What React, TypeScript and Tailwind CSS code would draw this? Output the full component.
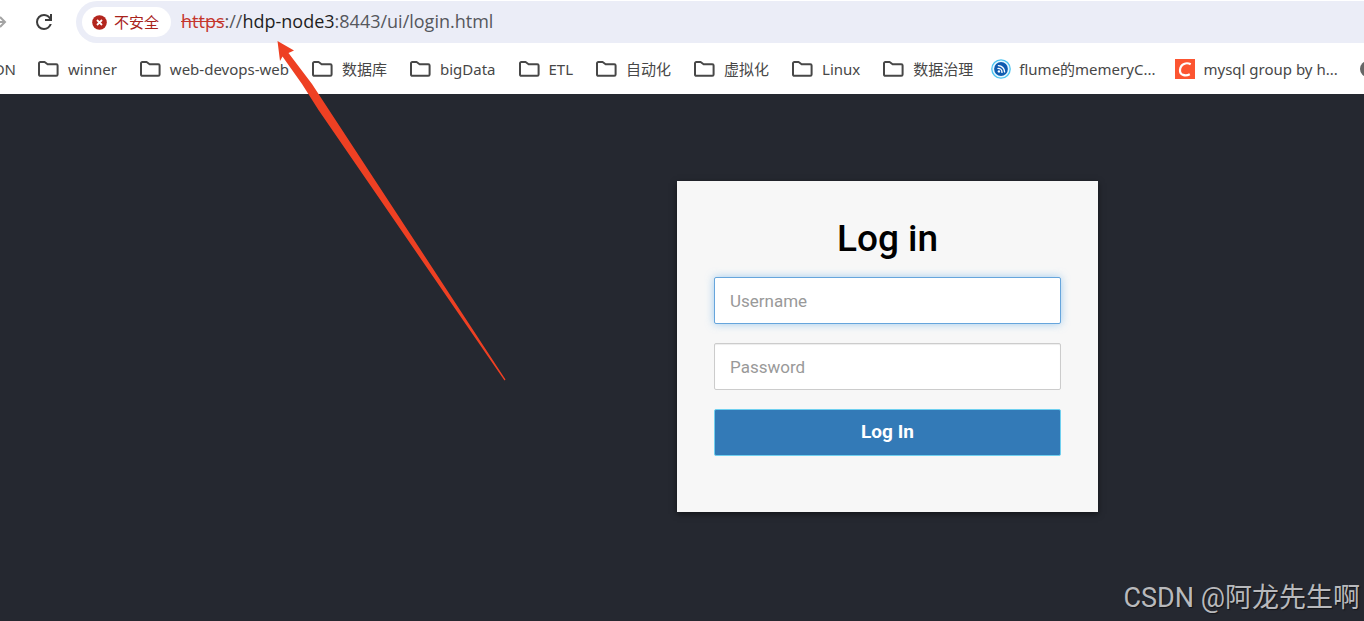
function FolderIcon() {
  return (
    <svg width="22" height="18" viewBox="0 0 22 18" fill="none" stroke="#474747" strokeWidth="2" strokeLinejoin="round" className="shrink-0" aria-hidden="true">
      <path d="M3.300 2H7.600l3 2.200H19.300A1.300 1.300 0 0 1 20.600 5.500v9A1.300 1.300 0 0 1 19.300 15.800H3.300A1.300 1.300 0 0 1 2 14.500V3.300A1.300 1.300 0 0 1 3.300 2z" />
    </svg>
  );
}

function FeedIcon() {
  return (
    <svg width="20" height="20" viewBox="0 0 20 20" className="shrink-0" aria-hidden="true">
      <circle cx="10" cy="10" r="9.200" fill="#e8f8ff" stroke="#4cc4f0" strokeWidth="1.300" />
      <circle cx="10" cy="10" r="6.900" fill="#0f5cb0" />
      <circle cx="7.900" cy="12.400" r="1.200" fill="#fff" />
      <path d="M7 9.400a4 4 0 0 1 4 4M7.400 6.600a6.400 6.400 0 0 1 6.200 6.300" fill="none" stroke="#fff" strokeWidth="1.400" strokeLinecap="round" />
    </svg>
  );
}

function CIcon() {
  return (
    <svg width="20" height="20" viewBox="0 0 20 20" className="shrink-0" aria-hidden="true">
      <rect width="20" height="20" fill="#fc5531" />
      <path d="M15.700 5.300C11.500 2.900 5.600 4.800 5 10.800c-.4 5.400 5.400 6.700 9.800 4.500" fill="none" stroke="#fff" strokeWidth="2.200" />
    </svg>
  );
}

const folders = ["winner", "web-devops-web", "数据库", "bigData", "ETL", "自动化", "虚拟化", "Linux", "数据治理"];

const sites = [
  { label: "flume的memeryC...", icon: <FeedIcon /> },
  { label: "mysql group by h...", icon: <CIcon /> },
];

function AddressBar() {
  return (
    <div className="flex h-[43px] items-center font-['Open_Sans','Noto_Sans_CJK_SC',sans-serif]">
      <button type="button" aria-label="Forward" className="w-8 shrink-0">
        <svg width="8" height="16" viewBox="0 0 8 16" fill="none" stroke="#a3a3a3" strokeWidth="2" aria-hidden="true">
          <path d="M0 8h5M0 3l5 5-5 5" />
        </svg>
      </button>
      <button type="button" aria-label="Reload" className="mr-5 w-6 shrink-0">
        <svg width="24" height="24" viewBox="0 -960 960 960" fill="#3c3c3c" aria-hidden="true">
          <path d="M480-160q-134 0-227-93t-93-227q0-134 93-227t227-93q69 0 132 28.500T720-690v-110h80v280H520v-80h168q-32-56-87.500-88T480-720q-100 0-170 70t-70 170q0 100 70 170t170 70q77 0 139-44t87-116h84q-28 106-114 173t-196 67Z" />
        </svg>
      </button>
      <div className="mt-px flex h-[42px] min-w-0 flex-1 items-center rounded-l-full bg-[#ebedf7] pl-[6px]">
        <button type="button" className="flex h-[30px] shrink-0 items-center gap-[7px] rounded-full bg-white pr-3 pl-[10px] text-[15px] text-[#a8231c]">
          <svg width="15" height="15" viewBox="0 0 15 15" aria-hidden="true">
            <circle cx="7.500" cy="7.500" r="7.300" fill="#b3261e" />
            <path d="M5 5l5 5M10 5l-5 5" stroke="#fff" strokeWidth="1.800" />
          </svg>
          不安全
        </button>
        <div className="ml-[10px] pb-px text-[18px] whitespace-nowrap text-[#55575c]">
          <span className="text-[#c5362c] line-through">https</span>://<span className="text-[#1f1f1f]">hdp-node3</span>:8443/ui/login.html
        </div>
      </div>
    </div>
  );
}

function BookmarksBar() {
  return (
    <nav className="flex h-[51px] items-center overflow-hidden pt-px font-['Noto_Sans','Noto_Sans_CJK_SC',sans-serif] text-[15px] whitespace-nowrap text-[#474747]">
      <a href="#" className="mr-[21px] w-4 shrink-0 [direction:rtl]">CSDN</a>
      <ul className="mr-[18px] flex shrink-0 gap-[22px]">
        {folders.map((label) => (
          <li key={label}>
            <a href="#" className="flex items-center gap-[9px]">
              <FolderIcon />
              {label}
            </a>
          </li>
        ))}
      </ul>
      <ul className="flex shrink-0 gap-5">
        {sites.map((site) => (
          <li key={site.label}>
            <a href="#" className="flex items-center gap-2">
              {site.icon}
              {site.label}
            </a>
          </li>
        ))}
        <li className="flex items-center">
          <svg width="20" height="20" viewBox="0 0 20 20" className="shrink-0" aria-hidden="true">
            <circle cx="10" cy="10" r="8" fill="#666" />
          </svg>
        </li>
      </ul>
    </nav>
  );
}

export default function App() {
  return (
    <div className="relative flex min-h-screen flex-col overflow-hidden bg-white">
      <AddressBar />
      <BookmarksBar />
      <main className="flex flex-1 items-start justify-center bg-[#252830] pt-[87px] pl-[411px] font-[Roboto,sans-serif]">
        <form className="flex w-[421px] flex-col gap-[19px] bg-[#f7f7f7] px-[37px] pt-9 pb-14 shadow-[0_2px_6px_rgba(0,0,0,0.5)]">
          <h1 className="-mb-[3px] text-center text-[37px] leading-[44px] font-medium text-black">Log in</h1>
          <input
            aria-label="Username"
            placeholder="Username"
            className="h-[47px] rounded-[2px] border border-[#66a5dc] bg-white px-[15px] text-[17px] shadow-[0_0_8px_rgba(102,175,233,0.6)] outline-none placeholder:text-[#999]"
          />
          <input
            type="password"
            aria-label="Password"
            placeholder="Password"
            className="h-[47px] rounded-[2px] border border-[#ccc] bg-white px-[15px] text-[17px] shadow-[inset_0_1px_1px_rgba(0,0,0,0.075)] outline-none placeholder:text-[#999]"
          />
          <button type="button" className="h-[47px] rounded-[2px] border border-[#6fd0f0] bg-[#337ab7] text-[19px] font-bold text-white">
            Log In
          </button>
        </form>
      </main>
      <svg width="240" height="345" viewBox="270 38 240 345" className="pointer-events-none absolute top-[38px] left-[270px]" aria-hidden="true">
        <path d="M277.500 41L294 50.500L288.500 53L312 84L329 110L505.500 379.500L504.500 380.500L318.500 110L302 84L282.500 56.500L280 61Z" fill="#ee4023" />
      </svg>
      <p className="absolute right-1 bottom-[3px] font-[Roboto,'Noto_Sans_CJK_SC',sans-serif] text-[27px] leading-10 text-[#b8b9bc] [text-shadow:1px_1px_1px_rgba(0,0,0,0.5)]">
        CSDN @阿龙先生啊
      </p>
    </div>
  );
}
